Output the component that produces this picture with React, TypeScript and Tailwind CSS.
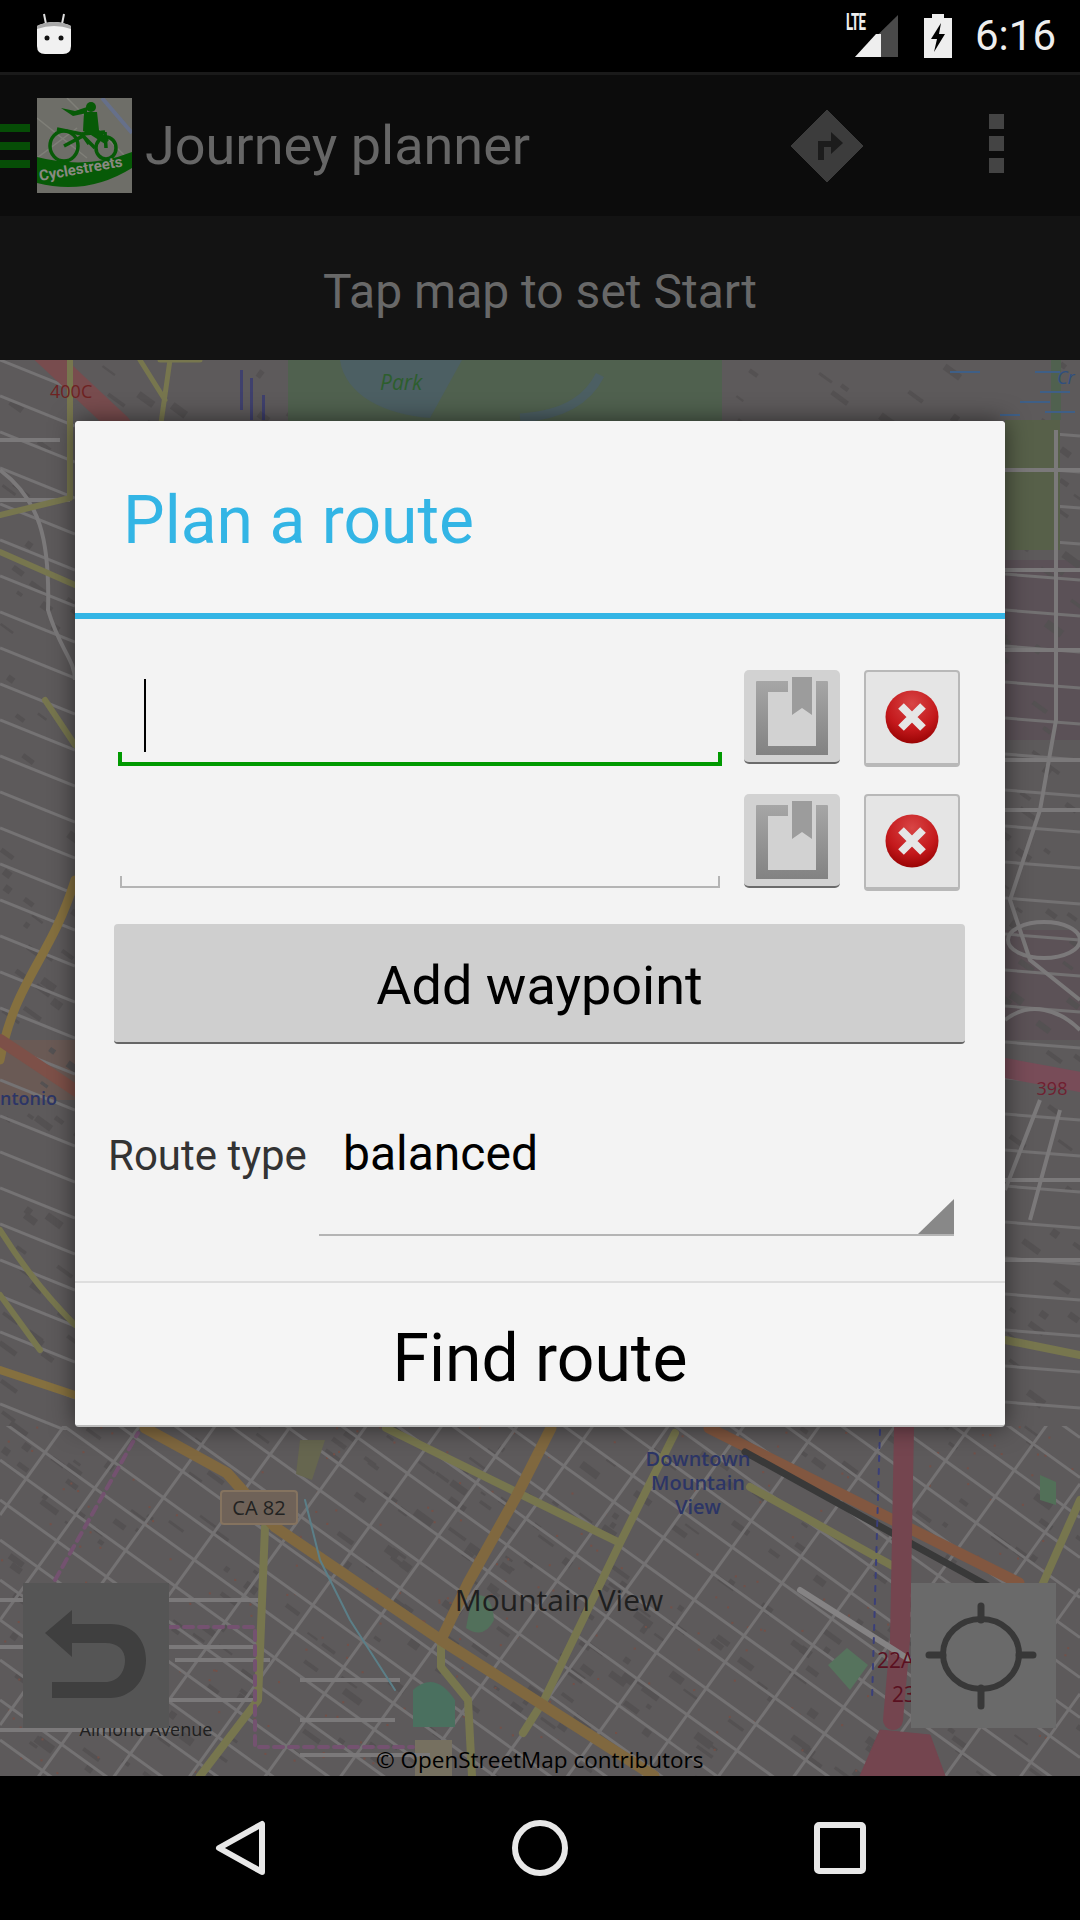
import React from "react";

const rnd = (seed: number) => {
  const x = Math.sin(seed * 127.1) * 43758.5453;
  return x - Math.floor(x);
};

// street grid, drawn in page coordinates
const streetsA = Array.from({ length: 64 }, (_, i) => -1400 + i * 40);
const streetsB = Array.from({ length: 34 }, (_, i) => 300 + i * 105);
const sideLeft = Array.from({ length: 30 }, (_, i) => 360 + i * 36);
const sideRight = Array.from({ length: 28 }, (_, i) => 430 + i * 36);
const blocks = Array.from({ length: 1100 }, (_, i) => ({
  x: rnd(i + 1) * 1080,
  y: 360 + rnd(i + 2000) * 1416,
  w: 5 + rnd(i + 4000) * 16,
  h: 2 + rnd(i + 6000) * 6,
}));
const speckles = Array.from({ length: 300 }, (_, i) => ({
  x: rnd(i + 8000) * 1080,
  y: 1426 + rnd(i + 9000) * 350,
}));

function MapDrawing() {
  return (
    <svg viewBox="0 360 1080 1416" className="absolute inset-0 h-full w-full">
      <defs>
        <clipPath id="bottomArea">
          <rect x="0" y="1426" width="1080" height="350" />
        </clipPath>
        <clipPath id="leftArea">
          <rect x="0" y="360" width="75" height="1070" />
        </clipPath>
        <clipPath id="rightArea">
          <rect x="1005" y="420" width="75" height="1010" />
        </clipPath>
      </defs>
      <rect x="0" y="360" width="1080" height="1416" fill="#5d5a5b" />
      <rect x="1005" y="560" width="75" height="180" fill="#5b5157" />
      <rect x="1005" y="930" width="75" height="110" fill="#5c5257" />
      <rect x="0" y="1040" width="75" height="60" fill="#6a5a55" />

      {blocks.map((b, i) => (
        <rect key={i} x={b.x} y={b.y} width={b.w} height={b.h} fill="#545152" transform={`rotate(36 ${b.x} ${b.y})`} />
      ))}
      {speckles.map((s, i) => (
        <rect key={i} x={s.x} y={s.y} width="2" height="2" fill="#745048" />
      ))}

      <g stroke="#747273" strokeWidth="3" fill="none" clipPath="url(#bottomArea)">
        {streetsA.map((c) => (
          <line key={c} x1="0" y1={c + 900} x2="1080" y2={c + 900 + 1080 * 0.72} />
        ))}
        {streetsB.map((c) => (
          <line key={c} x1="0" y1={c + 900} x2="1080" y2={c + 900 - 1080 * 1.39} />
        ))}
      </g>
      <g stroke="#757374" strokeWidth="3" fill="none" clipPath="url(#leftArea)">
        {sideLeft.map((c) => (
          <line key={c} x1="0" y1={c} x2="75" y2={c + 30} />
        ))}
      </g>
      <g stroke="#737172" strokeWidth="3" fill="none" clipPath="url(#rightArea)">
        {sideRight.map((c) => (
          <line key={c} x1="1005" y1={c} x2="1080" y2={c + 6} />
        ))}
      </g>

      {/* park and lake over the streets */}
      <rect x="288" y="360" width="434" height="62" fill="#50614f" />
      <path d="M340 360 C345 395 385 415 430 418 L462 360 Z" fill="#4c5f63" />
      <path d="M520 418 C570 415 590 395 600 375" stroke="#4c5f63" strokeWidth="9" fill="none" />
      <rect x="1005" y="420" width="55" height="130" fill="#576049" />
      <path d="M1056 360 V420" stroke="#50614f" strokeWidth="10" />
      <path d="M413 1690 Q435 1670 455 1700 L455 1727 L413 1727 Z" fill="#4a705f" />
      <path d="M472 1596 Q492 1590 494 1620 Q484 1640 466 1628 Z" fill="#52705b" />
      <path d="M847 1648 L868 1665 L850 1690 L828 1665 Z" fill="#56735d" />
      <path d="M1040 1475 L1056 1482 L1056 1505 L1040 1500 Z" fill="#527058" />
      <path d="M300 1440 L325 1440 L312 1480 L296 1474 Z" fill="#66664f" />
      <path d="M415 1740 L452 1740 L452 1776 L415 1776 Z" fill="#767060" />

      <g stroke="#7b797a" strokeWidth="4" fill="none">
        <path d="M0 440 H60 M0 500 H70 M0 470 C40 500 50 540 48 610 C60 650 75 660 75 680" />
        <path d="M1005 470 H1080 M1005 570 H1080 M1005 650 H1080 M1005 760 H1080 M1005 810 H1080 M1005 1180 H1080 M1005 1260 H1080" />
        <path d="M1056 430 V720 L1040 810 L1010 900 L1030 960 L1080 1000" />
        <ellipse cx="1044" cy="940" rx="36" ry="18" />
        <path d="M1005 1020 C1030 1000 1060 1010 1080 1030 M1040 1100 L1005 1190 M1060 1110 L1030 1220" />
        <path d="M0 1600 H260 M0 1647 H260 M30 1700 H260 M0 1730 H180 M175 1660 H270 M300 1680 H400 M300 1720 H395 M300 1755 H430" />
      </g>

      {/* major roads */}
      <g fill="none" strokeLinecap="round" strokeLinejoin="round">
        <path d="M40 350 L120 425" stroke="#784c4e" strokeWidth="22" />
        <path d="M0 515 L70 498 M0 552 L75 585 M70 360 V498 M45 700 L75 745 M0 1230 C25 1270 50 1300 75 1325 M0 1295 L40 1350" stroke="#77764e" strokeWidth="6" />
        <path d="M75 880 C50 960 15 980 0 1060" stroke="#85703f" strokeWidth="9" />
        <path d="M0 1370 L75 1395" stroke="#85703f" strokeWidth="8" />
        <path d="M0 1040 L75 1090 L110 1110" stroke="#7d5048" strokeWidth="12" />
        <path d="M1005 1068 L1080 1082" stroke="#784c58" strokeWidth="20" />
        <path d="M1005 1340 L1080 1355" stroke="#77764e" strokeWidth="8" />
        <path d="M160 360 L200 360 M160 430 L170 360 M140 360 L165 400" stroke="#77764e" strokeWidth="5" />

        <path d="M386 1428 L620 1543 M675 1433 L620 1543 L544 1700 L523 1733 M265 1527 L258 1700 L200 1776 M441 1640 L441 1667 L468 1700 L472 1776 M750 1487 L900 1570 M1080 1500 L1040 1590" stroke="#77764e" strokeWidth="8" />
        <path d="M145 1428 L227 1473 L275 1527 L441 1640 L654 1776 M551 1428 L516 1497 L468 1583 L441 1640" stroke="#80683f" strokeWidth="11" />
        <path d="M709 1428 L1019 1583" stroke="#825740" strokeWidth="11" />
        <path d="M745 1452 L990 1587" stroke="#393939" strokeWidth="7" />
        <path d="M904 1428 L900 1640 L893 1720" stroke="#74454f" strokeWidth="20" />
        <path d="M860 1776 L880 1730 L930 1735 L945 1776 Z" fill="#74454f" stroke="#74454f" />
        <path d="M800 1590 L910 1660" stroke="#858384" strokeWidth="6" />
        <path d="M55 1580 L138 1433 M169 1627 H255 V1747 H413" stroke="#745270" strokeWidth="4" strokeDasharray="9 6" />
        <path d="M880 1430 L872 1700" stroke="#3a3f7a" strokeWidth="2" strokeDasharray="5 8" />
        <path d="M305 1500 L320 1560 L350 1620 L395 1690" stroke="#5b7f88" strokeWidth="2" />
      </g>
      <g fill="#2b2f7a">
        <rect x="240" y="370" width="3" height="40" opacity="0.6" />
        <rect x="250" y="378" width="3" height="42" opacity="0.6" />
        <rect x="262" y="395" width="3" height="25" opacity="0.6" />
      </g>
      <g stroke="#3f5f86" strokeWidth="2">
        <path d="M950 372 H980 M1035 372 H1060 M1040 392 H1070 M1020 402 H1050 M1045 412 H1075 M1000 415 H1020" />
      </g>

      {/* labels */}
      <g fontFamily="'Open Sans', sans-serif">
        <text x="50" y="398" fontSize="18" fill="#6e2222">400C</text>
        <text x="380" y="390" fontSize="21" fontStyle="italic" fill="#2d5e2d">Park</text>
        <text x="1057" y="384" fontSize="18" fontStyle="italic" fill="#2f4f80">Cr</text>
        <text x="0" y="1105" fontSize="18" fontWeight="600" fill="#2c3566">ntonio</text>
        <text x="1052" y="1095" textAnchor="middle" fontSize="18" fill="#702030">398</text>
        <g fontSize="20" fontWeight="600" fill="#2c3566" textAnchor="middle">
          <text x="698" y="1466">Downtown</text>
          <text x="698" y="1490">Mountain</text>
          <text x="698" y="1514">View</text>
        </g>
        <rect x="221" y="1491" width="76" height="33" rx="3" fill="#6f6258" stroke="#85735f" strokeWidth="2" />
        <text x="259" y="1515" textAnchor="middle" fontSize="20" fill="#222">CA 82</text>
        <text x="559" y="1611" textAnchor="middle" fontSize="30" fill="#1f1f1f">Mountain View</text>
        <text x="146" y="1736" textAnchor="middle" fontSize="18" fill="#1f1f1f">Almond Avenue</text>
        <text x="877" y="1668" fontSize="21" fill="#5a1020">22A</text>
        <text x="892" y="1702" fontSize="21" fill="#5a1020">23</text>
      </g>
    </svg>
  );
}

function AndroidIcon() {
  return (
    <svg width="36" height="44" viewBox="0 0 36 44" className="ml-[36px] mt-[12px]">
      <path d="M8 2 L10 12 M28 2 L26 12" stroke="#ddd" strokeWidth="2" />
      <path d="M1 14 Q18 6 35 14 V34 Q35 42 27 42 H9 Q1 42 1 34 Z" fill="#f1f1f1" />
      <path d="M1 14 Q18 6 35 14 V17 Q18 11 1 17 Z" fill="#a8a8a8" />
      <circle cx="11" cy="26" r="2.5" fill="#111" />
      <circle cx="25" cy="26" r="2.5" fill="#111" />
    </svg>
  );
}

function StatusIcons() {
  return (
    <div className="ml-auto flex items-start">
      <div className="relative mt-[15px] h-[42px] w-[52px]">
        <svg width="52" height="42" viewBox="0 0 52 42">
          <path d="M52 0 V42 H9 Z" fill="#4a4a4a" />
          <path d="M35 19 V42 H9 L30 19 Z" fill="#eeeeee" />
        </svg>
        <span className="absolute left-0 top-[-5px] origin-left scale-x-[0.7] scale-y-[1.25] font-['Roboto',sans-serif] text-[19px] font-bold leading-[24px] tracking-[-1px] text-[#eee]">
          LTE
        </span>
      </div>
      <svg width="30" height="44" viewBox="0 0 30 44" className="ml-[25px] mt-[14px]">
        <path d="M9 0 H21 V4 H29 V44 H1 V4 H9 Z" fill="#eeeeee" />
        <path d="M18 9 L8 25 H14 L11 38 L22 20 H16 Z" fill="#000" />
      </svg>
      <span className="ml-[22px] mr-[24px] mt-[11px] font-['Roboto',sans-serif] text-[42px] leading-[50px] text-[#eee]">
        6:16
      </span>
    </div>
  );
}

function LogoIcon() {
  return (
    <svg width="95" height="95" viewBox="0 0 95 95" className="shrink-0">
      <rect width="95" height="95" fill="#6e6e68" />
      <path d="M0 20 L50 60 M30 0 L90 60 M0 60 L40 30" stroke="#7f7f78" strokeWidth="1.5" />
      <path d="M65 0 L95 35" stroke="#66708a" strokeWidth="4" />
      <g fill="none" stroke="#075a07" strokeWidth="3.5">
        <ellipse cx="27" cy="48" rx="14" ry="15" />
        <ellipse cx="69" cy="50" rx="10" ry="11" />
        <path d="M20 31 L45 36 L52 46 M45 36 L68 34 M27 48 L46 38 L58 50 M68 34 L69 50" />
      </g>
      <path d="M24 10 L38 13 L50 9 L50 15 L36 18 Z" fill="#075a07" />
      <circle cx="54" cy="9" r="5" fill="#075a07" />
      <path d="M47 14 L60 14 L62 32 L72 42 L68 46 L54 37 L46 33 Z" fill="#075a07" />
      <path d="M0 59 Q50 72 95 54 V70 Q50 98 0 85 Z" fill="#075a07" />
      <text x="3" y="83" fontFamily="'Roboto',sans-serif" fontWeight="700" fontSize="15" fill="#8a8a82" transform="rotate(-10 3 83)">
        Cyclestreets
      </text>
    </svg>
  );
}

function BookmarkButton() {
  return (
    <div className="h-[94px] w-[96px] shrink-0 rounded-[5px] border-b-2 border-[#6b6b6b] bg-[#d2d2d2]">
      <svg width="96" height="92" viewBox="0 0 96 92">
        <defs>
          <linearGradient id="bm" x1="0" y1="0" x2="0" y2="1">
            <stop offset="0" stopColor="#a6a6a6" />
            <stop offset="1" stopColor="#828282" />
          </linearGradient>
        </defs>
        <path d="M13 11 H44 V22 H24 V76 H72 V11 H83 Q84 11 84 12 V85 H12 V12 Q12 11 13 11 Z" fill="url(#bm)" />
        <path d="M48 7 H68 V45 L58 38 L48 45 Z" fill="#9c9c9c" />
      </svg>
    </div>
  );
}

function ClearButton() {
  return (
    <div className="h-[97px] w-[96px] shrink-0 rounded-[4px] border-2 border-b-4 border-[#b8b8b8] bg-[#e5e5e5]">
      <svg width="92" height="91" viewBox="0 0 92 91">
        <defs>
          <radialGradient id="xr" cx="0.5" cy="0.25" r="0.8">
            <stop offset="0" stopColor="#d84545" />
            <stop offset="0.6" stopColor="#c4191c" />
            <stop offset="1" stopColor="#920000" />
          </radialGradient>
        </defs>
        <circle cx="46" cy="45" r="26.5" fill="url(#xr)" />
        <path d="M35 34 L57 56 M57 34 L35 56" stroke="#e6e6e6" strokeWidth="8" />
      </svg>
    </div>
  );
}

export default function App() {
  return (
    <div className="flex h-[1920px] w-[1080px] flex-col overflow-hidden bg-black font-['Roboto',sans-serif]">
      <div className="flex h-[72px] shrink-0 bg-black">
        <AndroidIcon />
        <StatusIcons />
      </div>

      <div className="flex h-[144px] shrink-0 items-center border-t-[3px] border-[#1a1a1a] bg-[#0c0c0c]">
        <div className="flex w-[37px] shrink-0 flex-col gap-[10px]">
          <div className="h-2 w-[30px] bg-[#064d06]" />
          <div className="h-2 w-[30px] bg-[#064d06]" />
          <div className="h-2 w-[30px] bg-[#064d06]" />
        </div>
        <LogoIcon />
        <span className="ml-[13px] text-[54px] leading-[64px] text-[#666]">Journey planner</span>
        <svg width="72" height="72" viewBox="0 0 72 72" className="ml-[261px] shrink-0">
          <path d="M36 0 L72 36 L36 72 L0 36 Z" fill="#3c3c3c" stroke="#3c3c3c" strokeLinejoin="round" />
          <path d="M27 50 V31 H40 V22 L52 33 L40 44 V37 H33 V50 Z" fill="#1c1c1c" />
        </svg>
        <div className="mb-[4px] ml-[126px] flex flex-col gap-[7px]">
          <div className="h-[15px] w-[15px] bg-[#444]" />
          <div className="h-[15px] w-[15px] bg-[#444]" />
          <div className="h-[15px] w-[15px] bg-[#444]" />
        </div>
      </div>

      <div className="flex h-[144px] shrink-0 items-center justify-center bg-[#131313] pt-[8px] text-[48px] text-[#686868]">
        Tap map to set Start
      </div>

      <div className="relative flex-1">
        <MapDrawing />

        <div className="absolute left-[23px] top-[1223px] flex h-[145px] w-[146px] items-center justify-center bg-[#555]">
          <svg width="146" height="145" viewBox="23 1583 146 145">
            <path
              d="M45 1633 L72 1610 L72 1624 L110 1624 C135 1624 146 1642 146 1660 C146 1682 130 1698 110 1698 L52 1698 L52 1682 L105 1682 C118 1682 125 1672 125 1660 C125 1650 118 1643 105 1643 L72 1643 L72 1657 Z"
              fill="#3f3f3f"
            />
          </svg>
        </div>

        <div className="absolute left-[911px] top-[1223px] flex h-[145px] w-[145px] items-center justify-center bg-[#6a6a6a]">
          <svg width="145" height="145" viewBox="911 1583 145 145">
            <g fill="none" stroke="#383838" strokeWidth="6">
              <ellipse cx="981" cy="1654" rx="38" ry="35" />
              <path d="M981 1606 V1620 M981 1688 V1706 M929 1655 H943 M1019 1655 H1033" strokeLinecap="round" strokeWidth="7" />
            </g>
          </svg>
        </div>

        <span className="absolute left-[376px] top-[1384px] font-['Open_Sans',sans-serif] text-[22.5px] font-medium leading-[32px] text-black">
          © OpenStreetMap contributors
        </span>

        <div className="absolute left-[75px] top-[61px] flex h-[1006px] w-[930px] flex-col overflow-hidden rounded-[4px] border-b-2 border-[#bbb] bg-[#f3f3f3] shadow-[0_0_24px_rgba(0,0,0,0.55)]">
          <div className="flex h-[192px] shrink-0 items-end bg-[#f5f5f5] pb-[54px] pl-[48px] text-[66px] leading-[76px] text-[#33b5e5]">
            Plan a route
          </div>
          <div className="h-[6px] shrink-0 bg-[#33b5e5]" />

          <div className="flex flex-1 flex-col">
            <div className="ml-[43px] mt-[51px] flex h-[97px] items-start">
              <div className="flex h-[96px] w-[604px] items-end">
                <div className="h-[14px] w-1 bg-[#009900]" />
                <div className="flex h-full flex-1 flex-col justify-end border-b-4 border-[#009900]">
                  <div className="mb-[10px] ml-[22px] h-[73px] w-[2px] bg-black" />
                </div>
                <div className="h-[14px] w-1 bg-[#009900]" />
              </div>
              <div className="ml-[22px]">
                <BookmarkButton />
              </div>
              <div className="ml-[24px]">
                <ClearButton />
              </div>
            </div>

            <div className="ml-[45px] mt-[27px] flex h-[97px] items-start">
              <div className="flex h-[94px] w-[600px] items-end">
                <div className="h-3 w-[2px] bg-[#b4b4b4]" />
                <div className="flex-1 border-b-2 border-[#b4b4b4]" />
                <div className="h-3 w-[2px] bg-[#b4b4b4]" />
              </div>
              <div className="ml-[24px]">
                <BookmarkButton />
              </div>
              <div className="ml-[24px]">
                <ClearButton />
              </div>
            </div>

            <div className="ml-[39px] mt-[33px] flex h-[120px] w-[851px] items-center justify-center rounded-[4px] border-b-2 border-[#666] bg-[#cfcfcf] pt-[6px] text-[54px] leading-[64px] text-black">
              Add waypoint
            </div>

            <div className="ml-[33px] mt-[66px] flex items-start">
              <span className="mt-[21px] w-[211px] text-[42px] leading-[50px] text-[#333]">Route type</span>
              <div className="relative h-[126px] w-[635px] border-b-2 border-[#b4b4b4] pl-[24px] pt-[16px] text-[48px] leading-[56px] text-black">
                balanced
                <div className="absolute bottom-0 right-0 h-[35px] w-[36px] bg-[#888] [clip-path:polygon(100%_0,100%_100%,0_100%)]" />
              </div>
            </div>
          </div>

          <div className="h-[2px] shrink-0 bg-[#dedede]" />
          <div className="flex h-[142px] shrink-0 items-center justify-center bg-[#f5f5f5] pt-[10px] text-[66px] leading-[76px] text-black">
            Find route
          </div>
        </div>
      </div>

      <div className="flex h-[144px] shrink-0 items-center bg-black">
        <svg width="1080" height="144" viewBox="0 1776 1080 144">
          <g fill="none" stroke="#e8e8e8" strokeWidth="6" strokeLinejoin="round">
            <path d="M262 1824 V1872 L219 1848 Z" />
            <circle cx="540" cy="1848" r="25" />
            <rect x="817" y="1825" width="46" height="46" rx="2" />
          </g>
        </svg>
      </div>
    </div>
  );
}
